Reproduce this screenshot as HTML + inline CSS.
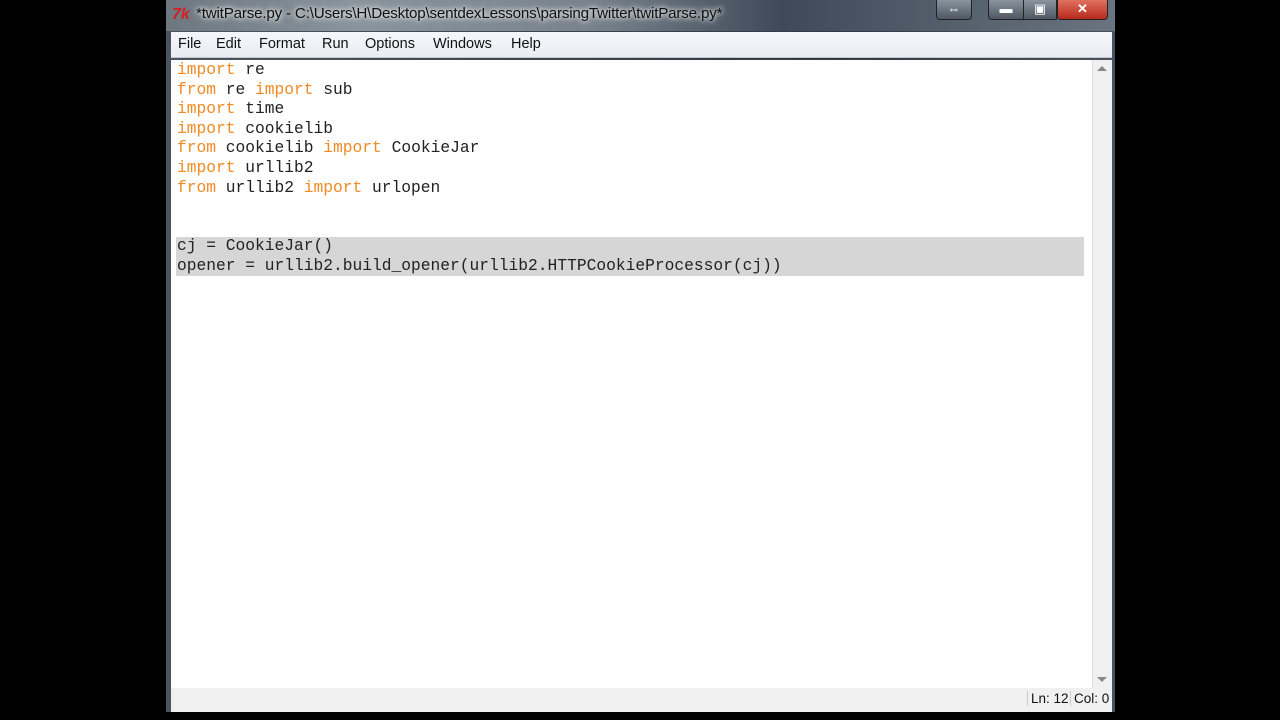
<!DOCTYPE html>
<html><head><meta charset="utf-8"><style>
*{margin:0;padding:0;box-sizing:border-box}
body{width:1280px;height:720px;background:#000;position:relative;overflow:hidden;font-family:"Liberation Sans",sans-serif}
#win{position:absolute;left:166px;top:0;width:949px;height:712px;background:linear-gradient(90deg,#4a5560,#3a4550 40%,#2e3a46 70%,#46525e);}
#title{position:absolute;left:0;top:0;width:949px;height:31px;background:linear-gradient(90deg,#6d7780 0%,#8a949c 20%,#78828c 45%,#3e4a58 65%,#56626e 85%,#6a7480 100%)}
#title .t{position:absolute;left:30px;top:5px;font-size:15.2px;color:#111;text-shadow:0 0 8px #fff,0 0 4px #eee;letter-spacing:-0.2px;white-space:nowrap}
#title .ic{position:absolute;left:6px;top:6px;font-size:16px;font-weight:bold;color:#d42020;font-style:italic}
.btn{position:absolute;top:0;height:20px;border:1px solid #222;border-top:none;border-radius:0 0 4px 4px;background:linear-gradient(#8a949e,#4e5862);color:#fff;text-align:center;font-size:13px;line-height:18px}
#menu{position:absolute;left:5px;top:32px;width:941px;height:26px;background:linear-gradient(#f6f7fb,#e9ecf4);border-bottom:1px solid #c8c8c8}
#menu span{position:absolute;top:4px;font-size:14.5px;color:#111}
#ed{position:absolute;left:5px;top:60px;width:921px;height:628px;background:#fff}
#sb{position:absolute;left:926px;top:60px;width:20px;height:628px;background:#f0f0f0;border-left:1px solid #ddd}
#status{position:absolute;left:5px;top:688px;width:941px;height:24px;background:#f0f0f0}
#status span{position:absolute;top:3px;font-size:13.5px;white-space:nowrap;border-left:1px solid #ccc;color:#111}
pre{position:absolute;left:11px;top:60px;font-family:"Liberation Mono",monospace;font-size:16.25px;line-height:19.6px;color:#222}
.k{color:#f08a24}
.sel{position:absolute;left:5px;top:177px;width:908px;height:39px;background:#d6d6d6}
</style></head><body>
<div id="win">
 <div id="title"><span class="ic">7k</span><span class="t">*twitParse.py - C:\Users\H\Desktop\sentdexLessons\parsingTwitter\twitParse.py*</span>
  <div class="btn" style="left:770px;width:36px">&#8660;</div>
  <div class="btn" style="left:822px;width:36px;border-radius:0 0 0 4px">&#9644;</div>
  <div class="btn" style="left:857px;width:34px;border-radius:0">&#9635;</div>
  <div class="btn" style="left:891px;width:51px;background:linear-gradient(#e07060,#b82a1a);font-weight:bold">&#10005;</div>
 </div>
 <div id="menu"><span style="left:7px">File</span><span style="left:45px">Edit</span><span style="left:88px">Format</span><span style="left:151px">Run</span><span style="left:194px">Options</span><span style="left:262px">Windows</span><span style="left:340px">Help</span></div>
 <div id="ed"><div class="sel"></div></div>
 <div id="sb"><div style="position:absolute;left:4px;top:6px;width:0;height:0;border:5px solid transparent;border-bottom:5px solid #888;border-top:none"></div><div style="position:absolute;left:4px;bottom:6px;width:0;height:0;border:5px solid transparent;border-top:5px solid #888;border-bottom:none"></div></div>
 <pre><span class="k">import</span> re
<span class="k">from</span> re <span class="k">import</span> sub
<span class="k">import</span> time
<span class="k">import</span> cookielib
<span class="k">from</span> cookielib <span class="k">import</span> CookieJar
<span class="k">import</span> urllib2
<span class="k">from</span> urllib2 <span class="k">import</span> urlopen


cj = CookieJar()
opener = urllib2.build_opener(urllib2.HTTPCookieProcessor(cj))</pre>
 <div id="status"><span style="left:856px;padding-left:3px">Ln: 12</span><span style="left:899px;padding-left:3px">Col: 0</span></div>
</div>
</body></html>
